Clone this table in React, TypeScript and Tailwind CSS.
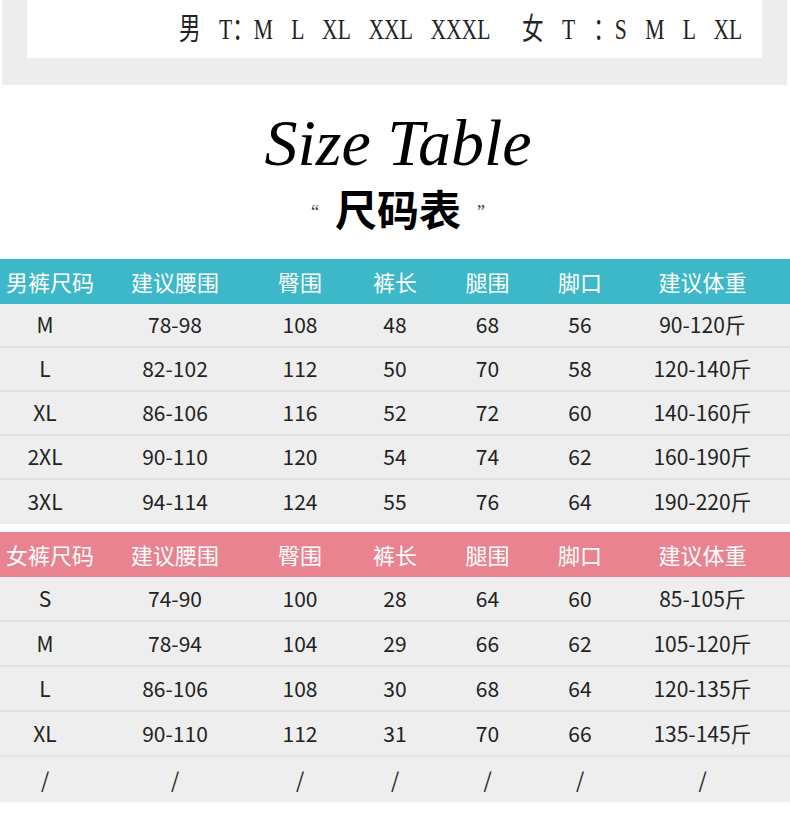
const cols = "grid grid-cols-[100px_150px_100px_90px_95px_90px_165px]";

const menHead = ["男裤尺码", "建议腰围", "臀围", "裤长", "腿围", "脚口", "建议体重"];
const womenHead = ["女裤尺码", "建议腰围", "臀围", "裤长", "腿围", "脚口", "建议体重"];

const menRows = [
  ["M", "78-98", "108", "48", "68", "56", "90-120斤"],
  ["L", "82-102", "112", "50", "70", "58", "120-140斤"],
  ["XL", "86-106", "116", "52", "72", "60", "140-160斤"],
  ["2XL", "90-110", "120", "54", "74", "62", "160-190斤"],
  ["3XL", "94-114", "124", "55", "76", "64", "190-220斤"],
];

const womenRows = [
  ["S", "74-90", "100", "28", "64", "60", "85-105斤"],
  ["M", "78-94", "104", "29", "66", "62", "105-120斤"],
  ["L", "86-106", "108", "30", "68", "64", "120-135斤"],
  ["XL", "90-110", "112", "31", "70", "66", "135-145斤"],
  ["/", "/", "/", "/", "/", "/", "/"],
];

const font = { fontFamily: '"Noto Sans CJK SC", "Noto Sans", sans-serif' };

const SizeTable = ({
  head,
  rows,
  headBg,
  rowH,
}: {
  head: string[];
  rows: string[][];
  headBg: string;
  rowH: string;
}) => (
  <div style={font}>
    <div className={`${cols} ${headBg} h-[45px] items-center text-white text-[22px]`}>
      {head.map((h, i) => (
        <div key={i} className={`text-center ${i === 6 ? "pr-[10px]" : ""}`}>
          {h}
        </div>
      ))}
    </div>
    {rows.map((r, ri) => (
      <div
        key={ri}
        className={`${cols} ${rowH} items-center bg-[#eeeeee] text-[#222] text-[21px] ${
          ri < rows.length - 1 ? "border-b-2 border-[#e2e2e2]" : ""
        }`}
      >
        {r.map((c, i) => (
          <div key={i} className={`text-center ${i === 0 ? "pr-[10px]" : ""} ${i === 6 ? "pr-[10px]" : ""}`}>
            {c}
          </div>
        ))}
      </div>
    ))}
  </div>
);

export default function App() {
  return (
    <div className="w-[790px] min-h-[816px] bg-white">
      {/* top frame with size list */}
      <div className="mx-[2px] w-[785px] h-[85px] bg-[#ededed] px-[25px]">
        <div className="h-[58px] bg-white flex items-start justify-end pr-[20px]">
          <div
            className="mt-[11px] flex text-[30px] leading-[36px] text-[#222] origin-right scale-x-[0.72] whitespace-nowrap [word-spacing:18px]"
            style={{ fontFamily: '"Liberation Serif", "Noto Sans CJK SC", serif' }}
          >
            <span>男 T：M L XL XXL XXXL</span>
            <span className="ml-[44px]">女 T ：S M L XL</span>
          </div>
        </div>
      </div>

      {/* title */}
      <div className="flex flex-col items-center pt-[20px]">
        <div
          className="italic text-[66px] leading-[76px] text-black pl-[6px]"
          style={{ fontFamily: '"Liberation Serif", serif' }}
        >
          Size Table
        </div>
        <div className="flex items-center gap-[16px] mt-[2px] pl-[6px]">
          <span className="text-[18px] text-[#333] mt-[8px]" style={{ fontFamily: '"Liberation Serif", serif' }}>
            “
          </span>
          <span className="text-[42px] font-bold leading-[50px] text-black" style={font}>
            尺码表
          </span>
          <span className="text-[18px] text-[#333] mt-[8px]" style={{ fontFamily: '"Liberation Serif", serif' }}>
            ”
          </span>
        </div>
      </div>

      <div className="mt-[26px]">
        <SizeTable head={menHead} rows={menRows} headBg="bg-[#3cb8c9]" rowH="h-[44px]" />
      </div>
      <div className="mt-[8px]">
        <SizeTable head={womenHead} rows={womenRows} headBg="bg-[#e8838f]" rowH="h-[45px]" />
      </div>
    </div>
  );
}
